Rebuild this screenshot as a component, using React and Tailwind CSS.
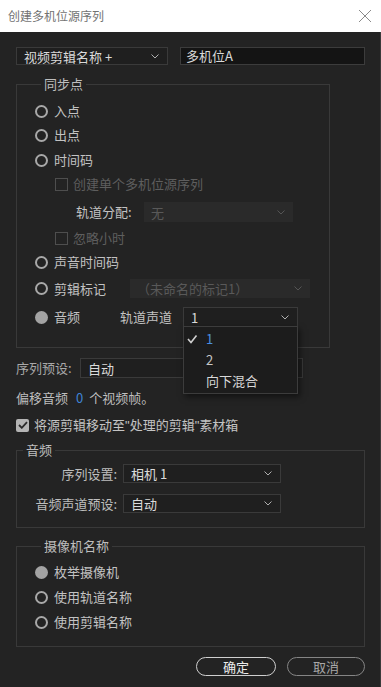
import React from 'react';

const cjk = "font-['Noto_Sans_CJK_SC','Noto_Sans',sans-serif]";

function Chevron({ className = '' }) {
  return (
    <svg width="8" height="5" viewBox="0 0 8 5" className={className}>
      <path d="M0.5 0.5 L4 4 L7.5 0.5" fill="none" stroke="currentColor" strokeWidth="1" />
    </svg>
  );
}

function Radio({ on }) {
  if (on) return <span className="block h-[13px] w-[13px] shrink-0 rounded-full bg-[#a3a3a3]" />;
  return <span className="block h-[13px] w-[13px] shrink-0 rounded-full border-2 border-[#a8a8a8]" />;
}

function Check({ on, disabled }) {
  if (on)
    return (
      <span className="flex h-[13px] w-[13px] shrink-0 items-center justify-center rounded-[2px] bg-[#b4b4b4]">
        <svg width="10" height="8" viewBox="0 0 10 8">
          <path d="M1 4 L3.8 6.8 L9 1.2" fill="none" stroke="#2a2a2a" strokeWidth="1.8" />
        </svg>
      </span>
    );
  return (
    <span
      className={`block h-[13px] w-[13px] shrink-0 border ${disabled ? 'border-[#4e4e4e]' : 'border-[#a8a8a8]'}`}
    />
  );
}

function Select({ value, width, height = 'h-[19px]', disabled, className = '' }) {
  return (
    <div
      style={{ width }}
      className={`flex ${height} shrink-0 items-center justify-between pl-[7px] pr-[8px] ${
        disabled
          ? 'bg-[#2a2a2a] text-[#595959]'
          : 'border border-[#3a3a3a] bg-[#1f1f1f] text-[#dadada]'
      } ${className}`}
    >
      <span className="leading-none">{value}</span>
      <Chevron className={disabled ? 'text-[#555]' : 'text-[#b0b0b0]'} />
    </div>
  );
}

function Legend({ children }) {
  return <legend className="ml-[6px] px-[3px] text-[13px] leading-[16px] text-[#bebebe]">{children}</legend>;
}

function RadioRow({ on, label, className = '' }) {
  return (
    <div className={`flex h-[20px] items-center gap-[6px] ${className}`}>
      <Radio on={on} />
      <span className="text-[#c2c2c2]">{label}</span>
    </div>
  );
}

export default function App() {
  return (
    <div className={`flex h-[687px] w-[381px] flex-col text-[13px] ${cjk}`}>
      {/* title bar */}
      <div className="flex h-[32px] shrink-0 items-center justify-between bg-white pl-[8px] pr-[9px]">
        <span className="text-[12px] text-[#727272]">创建多机位源序列</span>
        <svg width="14" height="14" viewBox="0 0 14 14">
          <path d="M1 1 L13 13 M13 1 L1 13" stroke="#8a8a8a" strokeWidth="1" />
        </svg>
      </div>

      <div className="flex flex-1 flex-col border-r border-[#3a3a3a] bg-[#232323] pl-[16px] pr-[15px]">
        {/* top row */}
        <div className="mt-[15px] flex gap-[12px]">
          <Select value="视频剪辑名称 +" width={152} height="h-[18px]" />
          <div className="flex h-[18px] w-[185px] items-center border border-[#3c3c3c] bg-[#141414] pl-[5px] text-[#d8d8d8]">
            多机位A
          </div>
        </div>

        {/* sync point */}
        <fieldset className="mt-[11px] w-[314px] border border-[#393939] pb-[20px] pl-[18px]">
          <Legend>同步点</Legend>
          <RadioRow label="入点" className="mt-[9px]" />
          <RadioRow label="出点" className="mt-[4px]" />
          <RadioRow label="时间码" className="mt-[5px]" />
          <div className="ml-[20px] mt-[4px] flex h-[20px] items-center gap-[5px]">
            <Check disabled />
            <span className="text-[#5e5e5e]">创建单个多机位源序列</span>
          </div>
          <div className="ml-[41px] mt-[8px] flex h-[20px] items-center">
            <span className="w-[68px] text-[#c2c2c2]">轨道分配:</span>
            <Select value="无" width={149} height="h-[20px]" disabled />
          </div>
          <div className="ml-[20px] mt-[6px] flex h-[20px] items-center gap-[5px]">
            <Check disabled />
            <span className="text-[#5e5e5e]">忽略小时</span>
          </div>
          <RadioRow label="声音时间码" className="mt-[4px]" />
          <div className="mt-[7px] flex h-[19px] items-center">
            <div className="flex w-[95px] items-center gap-[6px]">
              <Radio />
              <span className="text-[#c2c2c2]">剪辑标记</span>
            </div>
            <Select value="（未命名的标记1）" width={180} height="h-[19px]" disabled />
          </div>
          <div className="mt-[9px] flex h-[20px] items-center">
            <div className="flex w-[85px] items-center gap-[6px]">
              <Radio on />
              <span className="text-[#c2c2c2]">音频</span>
            </div>
            <span className="w-[63px] text-[#c2c2c2]">轨道声道</span>
            <div className="relative">
              <Select value="1" width={115} height="h-[20px]" />
              <div className="absolute left-0 top-[19px] z-10 flex w-[115px] flex-col border border-[#3c3c3c] bg-[#1c1c1c] pb-[2px] pt-[1px] shadow-[2px_3px_6px_rgba(0,0,0,0.5)]">
                <div className="flex h-[21px] items-center">
                  <svg width="22" height="10" viewBox="0 0 22 10">
                    <path d="M4 5 L7 8.5 L12.5 1.5" fill="none" stroke="#d0d0d0" strokeWidth="1.6" />
                  </svg>
                  <span className="text-[#4a8fe0]">1</span>
                </div>
                <div className="flex h-[21px] items-center pl-[22px] text-[#c8c8c8]">2</div>
                <div className="flex h-[21px] items-center pl-[22px] text-[#d8d8d8]">向下混合</div>
              </div>
            </div>
          </div>
        </fieldset>

        {/* sequence preset */}
        <div className="mt-[10px] flex h-[20px] items-center">
          <span className="w-[64px] text-[#a8a8a8]">序列预设:</span>
          <Select value="自动" width={223} height="h-[20px]" />
        </div>
        <div className="mt-[10px] flex h-[20px] items-center text-[#bebebe]">
          <span>偏移音频</span>
          <span className="ml-[8px] mr-[6px] text-[#3f84d6]">0</span>
          <span>个视频帧。</span>
        </div>
        <div className="mt-[7px] flex h-[20px] items-center gap-[5px]">
          <Check on />
          <span className="text-[#c4c4c4]">
            将源剪辑移动至<span className="font-['Liberation_Sans',sans-serif]">"</span>处理的剪辑
            <span className="font-['Liberation_Sans',sans-serif]">"</span>素材箱
          </span>
        </div>

        {/* audio */}
        <fieldset className="mt-[7px] border border-[#393939] pb-[14px]">
          <Legend>音频</Legend>
          <div className="mt-[6px] flex h-[19px] items-center">
            <span className="w-[102px] pr-[2px] text-right text-[#bebebe]">序列设置:</span>
            <Select value="相机 1" width={158} className="ml-[4px]" />
          </div>
          <div className="mt-[11px] flex h-[19px] items-center">
            <span className="w-[102px] pr-[2px] text-right text-[#bebebe]">音频声道预设:</span>
            <Select value="自动" width={158} className="ml-[4px]" />
          </div>
        </fieldset>

        {/* camera names */}
        <fieldset className="mt-[10px] border border-[#393939] pb-[14px] pl-[18px]">
          <Legend>摄像机名称</Legend>
          <RadioRow on label="枚举摄像机" className="mt-[8px]" />
          <RadioRow label="使用轨道名称" className="mt-[5px]" />
          <RadioRow label="使用剪辑名称" className="mt-[5px]" />
        </fieldset>

        {/* buttons */}
        <div className="mt-[10px] flex justify-end gap-[11px]">
          <button className="flex h-[19px] w-[80px] items-center justify-center rounded-full border border-[#cfcfcf] text-[#ececec]">
            确定
          </button>
          <button className="flex h-[19px] w-[78px] items-center justify-center rounded-full border border-[#858585] text-[#a8a8a8]">
            取消
          </button>
        </div>
      </div>
    </div>
  );
}
